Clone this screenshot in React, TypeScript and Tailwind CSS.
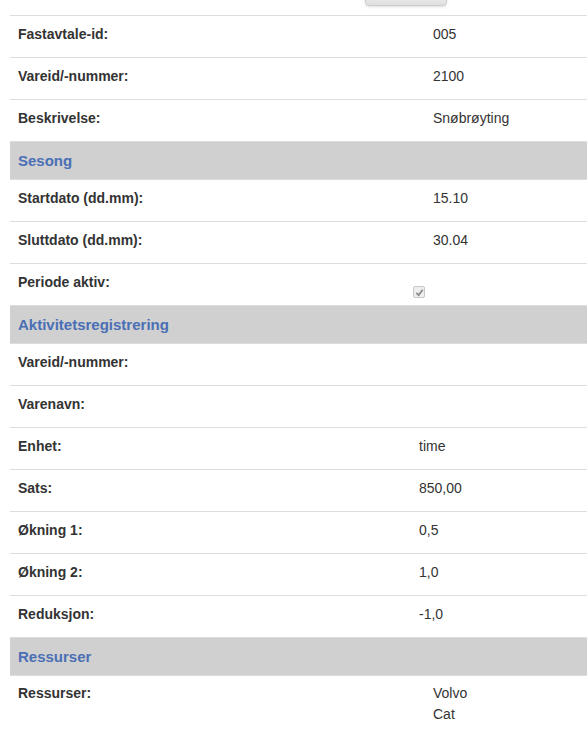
const font = { fontFamily: '"Liberation Sans", Arial, sans-serif' };

type Row = { label: string; value?: React.ReactNode };

function Rows({ rows, col }: { rows: Row[]; col: string }) {
  return (
    <>
      {rows.map((r) => (
        <div key={r.label} className={`grid ${col} border-t border-[#dddddd] h-[42px]`}>
          <div className="px-2 pt-[8px] font-bold text-[14px] leading-[20px] text-[#333333]">{r.label}</div>
          <div className="px-2 pt-[8px] text-[14px] leading-[20px] text-[#333333]">{r.value}</div>
        </div>
      ))}
    </>
  );
}

function Header({ title }: { title: string }) {
  return (
    <div className="h-[38px] bg-[#d0d0d0] px-2 pt-[2px] flex items-center border-t border-[#dddddd]">
      <span className="font-bold text-[15px] text-[#4a6fb5]">{title}</span>
    </div>
  );
}

export default function App() {
  return (
    <div style={font} className="w-[587px] h-[738px] overflow-hidden bg-white pl-[10px] relative">
      <div className="absolute left-[365px] top-[-20px] w-[82px] h-[26px] rounded border border-[#cccccc] bg-gradient-to-b from-white to-[#e0e0e0] shadow-sm" />
      <div className="pt-[15px]">
        <Rows
          col="grid-cols-[415px_1fr]"
          rows={[
            { label: "Fastavtale-id:", value: "005" },
            { label: "Vareid/-nummer:", value: "2100" },
            { label: "Beskrivelse:", value: "Snøbrøyting" },
          ]}
        />
        <Header title="Sesong" />
        <Rows
          col="grid-cols-[415px_1fr]"
          rows={[
            { label: "Startdato (dd.mm):", value: "15.10" },
            { label: "Sluttdato (dd.mm):", value: "30.04" },
            {
              label: "Periode aktiv:",
              value: (
                <span className="block ml-[-20px] mt-[14px] w-[12px] h-[12px] rounded-[2px] border border-[#c8c8c8] bg-[#eeeeee] flex items-center justify-center">
                  <svg width="9" height="9" viewBox="0 0 10 10">
                    <path d="M1.5 5.5 L4 8 L8.5 2" fill="none" stroke="#8a8a8a" strokeWidth="2" />
                  </svg>
                </span>
              ),
            },
          ]}
        />
        <Header title="Aktivitetsregistrering" />
        <Rows
          col="grid-cols-[401px_1fr]"
          rows={[
            { label: "Vareid/-nummer:" },
            { label: "Varenavn:" },
            { label: "Enhet:", value: "time" },
            { label: "Sats:", value: "850,00" },
            { label: "Økning 1:", value: "0,5" },
            { label: "Økning 2:", value: "1,0" },
            { label: "Reduksjon:", value: "-1,0" },
          ]}
        />
        <Header title="Ressurser" />
        <div className="grid grid-cols-[415px_1fr] border-t border-[#dddddd]">
          <div className="px-2 pt-[7px] font-bold text-[14px] leading-[21px] text-[#333333]">Ressurser:</div>
          <div className="px-2 pt-[7px] text-[14px] leading-[21px] text-[#333333]">
            <div>Volvo</div>
            <div>Cat</div>
          </div>
        </div>
      </div>
    </div>
  );
}
